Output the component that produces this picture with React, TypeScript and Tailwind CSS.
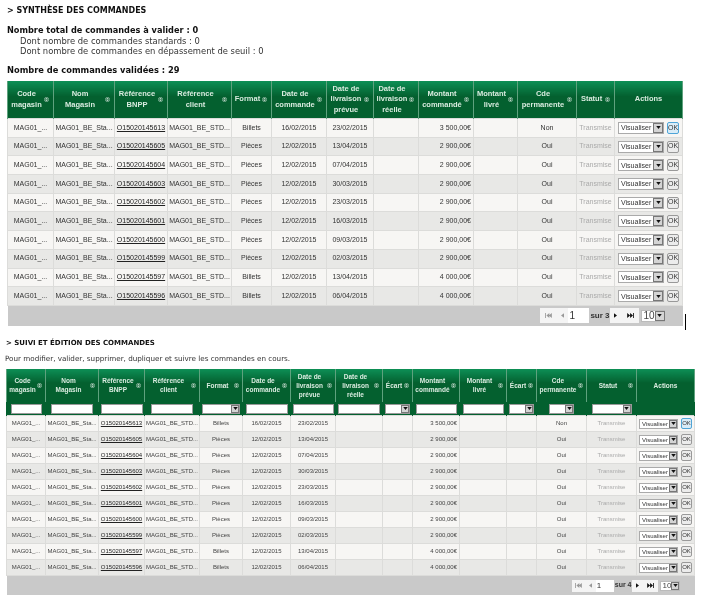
import React from "react";

type Col = { label: string[]; w: string; sort?: boolean; key: string; filter?: "text" | "select" | "none"; fw?: string };

const rows = [
  ["O15020145613", "Billets", "16/02/2015", "23/02/2015", "3 500,00€", "Non"],
  ["O15020145605", "Pièces", "12/02/2015", "13/04/2015", "2 900,00€", "Oui"],
  ["O15020145604", "Pièces", "12/02/2015", "07/04/2015", "2 900,00€", "Oui"],
  ["O15020145603", "Pièces", "12/02/2015", "30/03/2015", "2 900,00€", "Oui"],
  ["O15020145602", "Pièces", "12/02/2015", "23/03/2015", "2 900,00€", "Oui"],
  ["O15020145601", "Pièces", "12/02/2015", "16/03/2015", "2 900,00€", "Oui"],
  ["O15020145600", "Pièces", "12/02/2015", "09/03/2015", "2 900,00€", "Oui"],
  ["O15020145599", "Pièces", "12/02/2015", "02/03/2015", "2 900,00€", "Oui"],
  ["O15020145597", "Billets", "12/02/2015", "13/04/2015", "4 000,00€", "Oui"],
  ["O15020145596", "Billets", "12/02/2015", "06/04/2015", "4 000,00€", "Oui"],
];

const cols1: Col[] = [
  { key: "code", label: ["Code", "magasin"], w: "w-[46px]", sort: true },
  { key: "nom", label: ["Nom", "Magasin"], w: "w-[61px]", sort: true },
  { key: "ref", label: ["Référence", "BNPP"], w: "w-[53px]", sort: true },
  { key: "client", label: ["Référence", "client"], w: "w-[64px]", sort: true },
  { key: "format", label: ["Format"], w: "w-[40px]", sort: true },
  { key: "cmd", label: ["Date de", "commande"], w: "w-[55px]", sort: true },
  { key: "prev", label: ["Date de", "livraison", "prévue"], w: "w-[47px]", sort: true },
  { key: "reel", label: ["Date de", "livraison", "réelle"], w: "w-[45px]", sort: true },
  { key: "mont", label: ["Montant", "commandé"], w: "w-[55px]", sort: true },
  { key: "livre", label: ["Montant", "livré"], w: "w-[44px]", sort: true },
  { key: "perm", label: ["Cde", "permanente"], w: "w-[59px]", sort: true },
  { key: "statut", label: ["Statut"], w: "w-[38px]", sort: true },
  { key: "actions", label: ["Actions"], w: "w-[68px]" },
];

const cols2: Col[] = [
  { key: "code", label: ["Code", "magasin"], w: "w-[39px]", sort: true, filter: "text", fw: "w-[31px]" },
  { key: "nom", label: ["Nom", "Magasin"], w: "w-[53px]", sort: true, filter: "text", fw: "w-[42px]" },
  { key: "ref", label: ["Référence", "BNPP"], w: "w-[46px]", sort: true, filter: "text", fw: "w-[42px]" },
  { key: "client", label: ["Référence", "client"], w: "w-[55px]", sort: true, filter: "text", fw: "w-[42px]" },
  { key: "format", label: ["Format"], w: "w-[43px]", sort: true, filter: "select", fw: "w-[38px]" },
  { key: "cmd", label: ["Date de", "commande"], w: "w-[48px]", sort: true, filter: "text", fw: "w-[42px]" },
  { key: "prev", label: ["Date de", "livraison", "prévue"], w: "w-[45px]", sort: true, filter: "text", fw: "w-[41px]" },
  { key: "reel", label: ["Date de", "livraison", "réelle"], w: "w-[47px]", sort: true, filter: "text", fw: "w-[42px]" },
  { key: "ecart", label: ["Écart"], w: "w-[30px]", sort: true, filter: "select", fw: "w-[25px]" },
  { key: "mont", label: ["Montant", "commandé"], w: "w-[47px]", sort: true, filter: "text", fw: "w-[41px]" },
  { key: "livre", label: ["Montant", "livré"], w: "w-[47px]", sort: true, filter: "text", fw: "w-[41px]" },
  { key: "ecart", label: ["Écart"], w: "w-[30px]", sort: true, filter: "select", fw: "w-[25px]" },
  { key: "perm", label: ["Cde", "permanente"], w: "w-[50px]", sort: true, filter: "select", fw: "w-[25px]" },
  { key: "statut", label: ["Statut"], w: "w-[50px]", sort: true, filter: "select", fw: "w-[40px]" },
  { key: "actions", label: ["Actions"], w: "w-[58px]", filter: "none" },
];

function SortIcon() {
  return (
    <svg viewBox="0 0 6 6" className="w-[5px] h-[5px] shrink-0">
      <circle cx="3" cy="3" r="2.6" fill="none" stroke="#bcd6c6" strokeWidth="0.7" />
      <path d="M1.2 2.6 3 1 4.8 2.6ZM1.2 3.4 3 5 4.8 3.4Z" fill="#bcd6c6" />
    </svg>
  );
}

function Arrow({ small }: { small?: boolean }) {
  return (
    <span className={"flex items-center justify-center h-full shrink-0 bg-[#d4d4d4] border border-[#777777] " + (small ? "w-[8px]" : "w-[10px]")}>
      <svg viewBox="0 0 6 4" className="w-[5px] h-[3px]">
        <path d="M0 0h6L3 4Z" fill="#111111" />
      </svg>
    </span>
  );
}

function Actions({ small, focus }: { small?: boolean; focus?: boolean }) {
  return (
    <div className="flex items-center justify-center gap-[3px]">
      <div
        className={
          small
            ? "flex items-center w-[39px] h-[10px] bg-white border border-[#aaaaaa] text-[6px] text-[#333333] pl-[2px] overflow-hidden"
            : "flex items-center w-[46px] h-[12px] bg-white border border-[#aaaaaa] text-[7px] text-[#333333] pl-[2px] overflow-hidden"
        }
      >
        <span className="flex-1 min-w-0 text-left leading-none">Visualiser</span>
        <Arrow small={small} />
      </div>
      <div
        className={
          (small ? "w-[11px] h-[11px] text-[6px] " : "w-[12px] h-[12px] text-[7px] ") +
          (focus
            ? "flex items-center justify-center rounded-[2px] border border-[#4fa5d8] bg-[#d9ecf7] text-[#333333]"
            : "flex items-center justify-center rounded-[2px] border border-[#999999] bg-[#ececec] text-[#333333]")
        }
      >
        OK
      </div>
    </div>
  );
}

function Pager({ total, small }: { total: string; small?: boolean }) {
  const h = small ? "h-[12px]" : "h-[15px]";
  return (
    <div className={"flex items-center justify-end h-full font-['Liberation_Sans',sans-serif] " + (small ? "pr-[15px] text-[7px]" : "pr-[18px] text-[8px]")}>
      <div className={"flex items-center justify-around bg-[#f4f4f4] " + h + (small ? " w-[24px]" : " w-[28px]")}>
        <svg viewBox="0 0 8 6" className="w-[7px] h-[5px]"><path d="M0 0h1v6H0ZM5 0v6L1.5 3ZM8 0v6L4.5 3Z" fill="#999999" /></svg>
        <svg viewBox="0 0 4 6" className="w-[3px] h-[5px]"><path d="M4 0v6L0 3Z" fill="#999999" /></svg>
      </div>
      <div className={"flex items-center bg-white pl-[1px] text-[#333333] " + h + (small ? " w-[18px] text-[8px]" : " w-[21px] text-[10px]")}>1</div>
      <span className="font-bold text-[#333333] ml-[1px] whitespace-nowrap">{total}</span>
      <div className={"flex items-center justify-around bg-[#f4f4f4] " + h + (small ? " w-[26px]" : " w-[29px]")}>
        <svg viewBox="0 0 4 6" className="w-[3px] h-[5px]"><path d="M0 0v6L4 3Z" fill="#111111" /></svg>
        <svg viewBox="0 0 8 6" className="w-[7px] h-[5px]"><path d="M0 0v6L3.5 3ZM3.5 0v6L7 3ZM7 0h1v6H7Z" fill="#111111" /></svg>
      </div>
      <div className={"flex items-center bg-white border border-[#bbbbbb] ml-[2px] text-[#444444] " + (small ? "w-[20px] h-[10px] text-[8px] ml-[1px]" : "w-[24px] h-[12px] text-[10px]")}>
        <span className="flex-1 pl-[2px] leading-none">10</span>
        <Arrow small={small} />
      </div>
    </div>
  );
}

function Cell({ k, row, small, first }: { k: string; row: string[]; small?: boolean; first: boolean }) {
  switch (k) {
    case "code":
      return <>MAG01_...</>;
    case "nom":
      return <>MAG01_BE_Sta...</>;
    case "ref":
      return <span className="underline text-[#222222]">{row[0]}</span>;
    case "client":
      return <>MAG01_BE_STD...</>;
    case "format":
      return <>{row[1]}</>;
    case "cmd":
      return <>{row[2]}</>;
    case "prev":
      return <>{row[3]}</>;
    case "mont":
      return <div className="text-right pr-[2px]">{row[4]}</div>;
    case "perm":
      return <>{row[5]}</>;
    case "statut":
      return <span className="text-[#aaaaaa]">Transmise</span>;
    case "actions":
      return <Actions small={small} focus={first} />;
    default:
      return null;
  }
}

function OrdersTable({ cols, small, total }: { cols: Col[]; small?: boolean; total: string }) {
  const hasFilter = !!small;
  return (
    <table className="table-fixed border-collapse font-['Liberation_Sans',sans-serif]">
      <colgroup>
        {cols.map((c, i) => (
          <col key={i} className={c.w} />
        ))}
      </colgroup>
      <thead>
        <tr className={small ? "h-[33px]" : "h-[37.5px]"}>
          {cols.map((c, i) => (
            <th
              key={i}
              className={
                "p-0 border-x border-[#5fa27e] bg-[linear-gradient(#0d8f56,#04602f_42%,#04602f)] text-[#d9ebdf] font-bold " +
                (small ? "text-[6.5px] leading-[9px]" : "text-[7.5px] leading-[10.5px]")
              }
            >
              <div className="flex items-center px-[1px]">
                <div className="flex-1 min-w-0 text-center">
                  {c.label.map((l, j) => (
                    <div key={j} className="whitespace-nowrap">{l}</div>
                  ))}
                </div>
                {c.sort && <SortIcon />}
                {c.sort && <span className={small ? "w-[2px] shrink-0" : "w-[3px] shrink-0"} />}
              </div>
            </th>
          ))}
        </tr>
        {hasFilter && (
          <tr className="h-[14px]">
            {cols.map((c, i) => (
              <th key={i} className="p-0 bg-[#04602f] border-x border-[#04602f]">
                {c.filter === "text" && <div className={"h-[10px] mx-auto bg-white border border-[#999999] " + c.fw} />}
                {c.filter === "select" && (
                  <div className={"flex justify-end h-[10px] mx-auto bg-white border border-[#999999] " + c.fw}>
                    <Arrow small />
                  </div>
                )}
              </th>
            ))}
          </tr>
        )}
      </thead>
      <tbody>
        {rows.map((r, i) => (
          <tr key={i} className={(small ? "h-[16px] " : "h-[18.7px] ") + (i % 2 === 0 ? "bg-[#f7f6f4]" : "bg-[#e8e8e6]")}>
            {cols.map((c, j) => (
              <td
                key={j}
                className={
                  "p-0 text-center whitespace-nowrap overflow-hidden border border-[#dcdcda] " +
                  (small ? "text-[6px] text-[#444444]" : "text-[7px] text-[#333333]")
                }
              >
                <Cell k={c.key} row={r} small={small} first={i === 0} />
              </td>
            ))}
          </tr>
        ))}
        <tr className={small ? "h-[19px] bg-[#c9c9c9]" : "h-[20.5px] bg-[#c9c9c9]"}>
          <td colSpan={cols.length} className="p-0">
            <Pager total={total} small={small} />
          </td>
        </tr>
      </tbody>
    </table>
  );
}

export default function App() {
  return (
    <div className="relative w-[710px] h-[600px] overflow-hidden bg-white text-[#111111] font-['DejaVu_Sans',sans-serif] blur-[0.4px]">
      <div className="pt-[6px]">
        <div className="pl-[7px] h-[10px] leading-[10px] text-[8px] font-bold">&gt; SYNTHÈSE DES COMMANDES</div>
        <div className="pl-[7px] mt-[9px] text-[8.4px] leading-[10.5px]">
          <div className="font-bold text-[8.2px]">Nombre total de commandes à valider : 0</div>
          <div className="pl-[13px] text-[#333333]">Dont nombre de commandes standards : 0</div>
          <div className="pl-[13px] text-[#333333]">Dont nombre de commandes en dépassement de seuil : 0</div>
        </div>
        <div className="pl-[7px] mt-[8.5px] h-[10px] leading-[10px] text-[8.3px] font-bold">Nombre de commandes validées : 29</div>
        <div className="pl-[7px] mt-[6px]">
          <OrdersTable cols={cols1} total="sur 3" />
        </div>
        <div className="pl-[6px] mt-[12px] h-[10px] leading-[10px] text-[7px] font-bold">&gt; SUIVI ET ÉDITION DES COMMANDES</div>
        <div className="pl-[5px] mt-[6px] h-[10px] leading-[10px] text-[7.2px] text-[#333333]">
          Pour modifier, valider, supprimer, dupliquer et suivre les commandes en cours.
        </div>
        <div className="pl-[6px] mt-[5px]">
          <OrdersTable cols={cols2} small total="sur 4" />
        </div>
      </div>
      <div className="absolute left-[685px] top-[314px] w-[1px] h-[16px] bg-black" />
    </div>
  );
}
